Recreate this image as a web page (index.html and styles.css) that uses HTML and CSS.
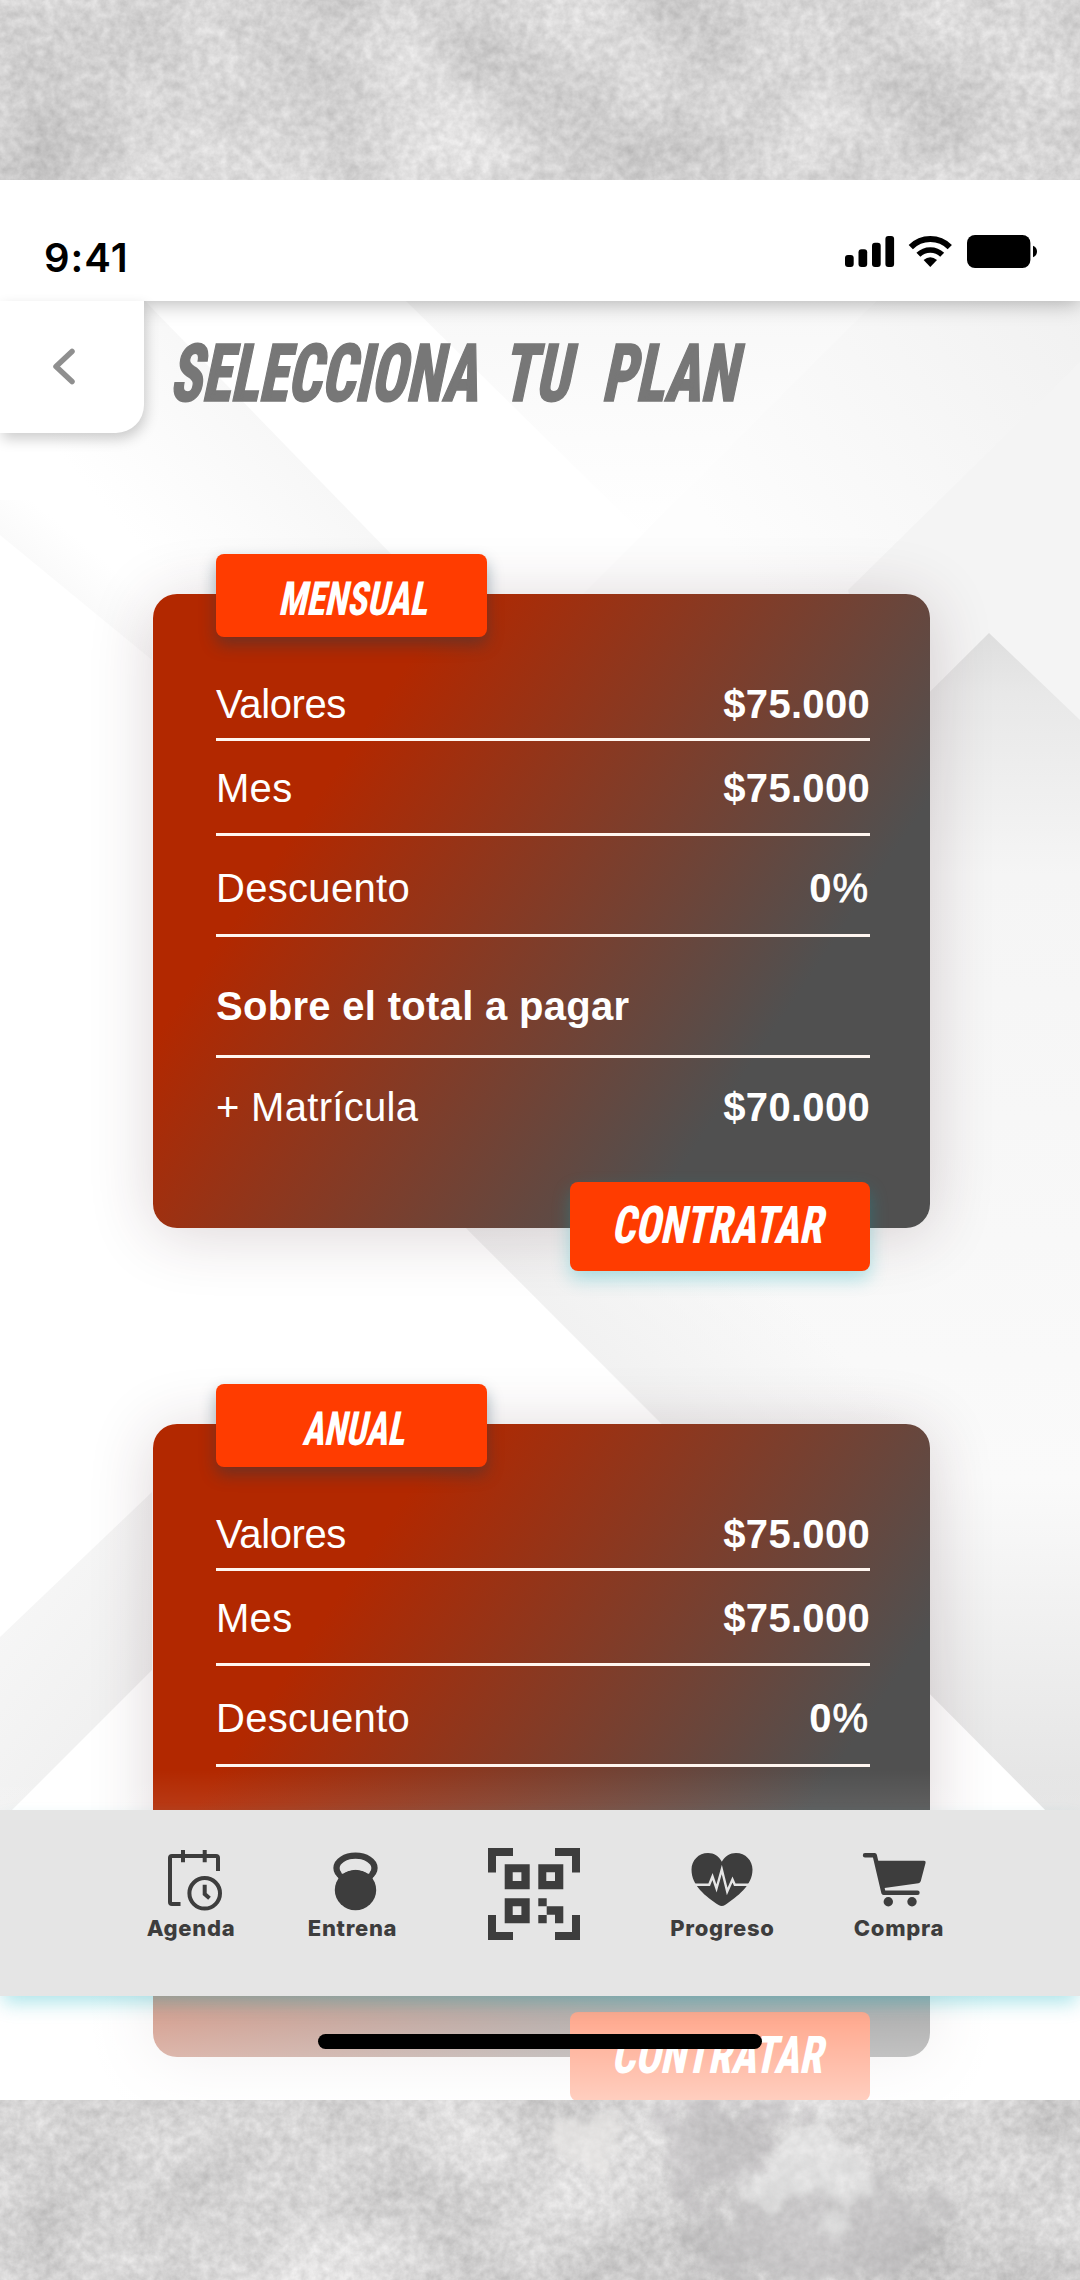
FILE: index.html
```html
<!doctype html>
<html lang="es">
<head>
    <meta charset="UTF-8">
    <meta name="viewport" content="width=device-width, initial-scale=1.0">
    <title>Selecciona tu plan</title>
    <link rel="stylesheet" href="styles.css">
</head>
<body>
    <svg class="wall" width="1080" height="2280" viewBox="0 0 1080 2280">
        <filter id="concrete" x="0" y="0" width="100%" height="100%" color-interpolation-filters="sRGB">
            <feTurbulence type="fractalNoise" baseFrequency="0.008 0.009" numOctaves="7" seed="31" result="big"/>
            <feColorMatrix in="big" type="matrix" values="0.2 0 0 0 0.737  0.2 0 0 0 0.733  0.2 0 0 0 0.733  0 0 0 0 1" result="stains"/>
            <feTurbulence type="fractalNoise" baseFrequency="0.11" numOctaves="4" seed="5" result="fine"/>
            <feColorMatrix in="fine" type="matrix" values="0.15 0 0 0 0.425  0.15 0 0 0 0.425  0.15 0 0 0 0.425  0 0 0 0 1" result="grain"/>
            <feComposite in="stains" in2="grain" operator="arithmetic" k1="0" k2="1" k3="1" k4="-0.5"/>
        </filter>
        <filter id="soft" x="-50%" y="-50%" width="200%" height="200%">
            <feTurbulence type="fractalNoise" baseFrequency="0.04" numOctaves="5" seed="3" result="edge"/>
            <feDisplacementMap in="SourceGraphic" in2="edge" scale="90" xChannelSelector="R" yChannelSelector="G"/>
            <feGaussianBlur stdDeviation="3"/>
        </filter>
        <rect width="1080" height="2280" filter="url(#concrete)"/>
        <g filter="url(#soft)">
            <path d="M670 2100H800L740 2190L690 2200L660 2150Z" fill="#b4b2b3" opacity=".4"/>
            <path d="M780 2180L860 2170L960 2200L900 2280H680L700 2230Z" fill="#b4b2b3" opacity=".45"/>
            <path d="M560 2100L620 2110L610 2180L570 2160Z" fill="#ecebea" opacity=".6"/>
            <path d="M730 2190L820 2120L880 2190L820 2240L830 2180L770 2210Z" fill="#eeeded" opacity=".5"/>
        </g>
    </svg>

    <div class="phone">
        <div class="status">
            <span class="time">9:41</span>
            <svg class="status-icons" width="200" height="42" viewBox="0 0 200 42">
                <rect x="5" y="25" width="8.7" height="12" rx="3"/>
                <rect x="18.5" y="19.3" width="8.7" height="17.7" rx="3"/>
                <rect x="32" y="12.7" width="8.7" height="24.3" rx="3"/>
                <rect x="45.4" y="6" width="8.7" height="31" rx="3"/>
                <g class="wifi">
                    <path d="M70.8 17.2A27.5 27.5 0 0 1 109.8 17.2" stroke-width="6"/>
                    <path d="M78.4 24.8A17 17 0 0 1 102.2 24.8" stroke-width="5.6"/>
                </g>
                <path d="M83.6 30Q90.3 24.4 97 30L90.3 37Z"/>
                <rect x="127" y="5" width="63.4" height="33" rx="8"/>
                <path d="M193 15.7Q197 17.5 197 21.5T193 27.3Z"/>
            </svg>
        </div>

        <div class="screen">
            <svg class="shapes" width="1080" height="1799" viewBox="0 301 1080 1799">
                <defs>
                    <linearGradient id="s1" x1="0" y1="0" x2="0" y2="1">
                        <stop offset="0" stop-color="#f3f3f3"/><stop offset="1" stop-color="#ffffff"/>
                    </linearGradient>
                    <linearGradient id="s2" gradientUnits="userSpaceOnUse" x1="1080" y1="301" x2="740" y2="560">
                        <stop offset="0" stop-color="#f1f1f1"/><stop offset="1" stop-color="#fdfdfd"/>
                    </linearGradient>
                    <linearGradient id="s3" x1="0" y1="0" x2="0" y2="1">
                        <stop offset="0" stop-color="#dedede"/><stop offset=".05" stop-color="#e8e8e8"/>
                        <stop offset=".2" stop-color="#f5f5f5"/><stop offset=".7" stop-color="#fafafa"/>
                        <stop offset="1" stop-color="#e1e1e1"/>
                    </linearGradient>
                    <linearGradient id="s4" gradientUnits="userSpaceOnUse" x1="560" y1="1330" x2="690" y2="1200">
                        <stop offset="0" stop-color="#f1f1f1"/><stop offset="1" stop-color="#f1f1f1" stop-opacity="0"/>
                    </linearGradient>
                    <linearGradient id="s5" x1="0" y1="0" x2=".6" y2="1">
                        <stop offset="0" stop-color="#f9f9f9"/><stop offset="1" stop-color="#efefef"/>
                    </linearGradient>
                    <linearGradient id="s6" gradientUnits="userSpaceOnUse" x1="290" y1="440" x2="150" y2="560">
                        <stop offset="0" stop-color="#f7f7f7"/><stop offset="1" stop-color="#ffffff"/>
                    </linearGradient>
                    <linearGradient id="s7" gradientUnits="userSpaceOnUse" x1="76" y1="598" x2="106" y2="562">
                        <stop offset="0" stop-color="#fafafa"/><stop offset="1" stop-color="#fafafa" stop-opacity="0"/>
                    </linearGradient>
                </defs>
                <path d="M145 301L430 594H0V301Z" fill="url(#s6)"/>
                <path d="M0 535L152 660V500H0Z" fill="url(#s7)"/>
                <path d="M406 301H876L647 538Z" fill="url(#s1)" opacity=".6"/>
                <path d="M876 301H1080V611H566Z" fill="url(#s2)"/>
                <path d="M1080 362V900H930L848 590Z" fill="#f4f4f4"/>
                <path d="M989 633L1080 720V1845L465 1227L640 980Z" fill="url(#s3)"/>
                <path d="M465 1227L662 1424H930V1200H465Z" fill="url(#s4)"/>
                <path d="M0 1637L152 1492V1670L12 1810H0Z" fill="url(#s5)"/>
            </svg>

            <div class="heading">
                <button class="back" aria-label="Volver">
                    <svg width="24" height="40" viewBox="0 0 24 40"><path d="M20 4.500L4 19.500L20 34.500"/></svg>
                </button>
                <h1 class="title">
                    <svg class="display" width="600" height="80" viewBox="0 0 600 80">
                        <g transform="translate(0 68) skewX(-12)" font-size="80">
                            <text x="-3" textLength="308" lengthAdjust="spacingAndGlyphs">SELECCIONA</text>
                            <text x="329" textLength="68" lengthAdjust="spacingAndGlyphs">TU</text>
                            <text x="429" textLength="135" lengthAdjust="spacingAndGlyphs">PLAN</text>
                        </g>
                    </svg>
                </h1>
            </div>

            <div class="plans">
                <section class="plan">
                    <h2 class="plan-name">
                        <svg class="display" width="271" height="83" viewBox="0 0 271 83">
                            <text transform="translate(62 61) skewX(-12)" font-size="47" textLength="149" lengthAdjust="spacingAndGlyphs">MENSUAL</text>
                        </svg>
                    </h2>
                    <div class="row row-values"><span>Valores</span><b>$75.000</b></div>
                    <div class="row row-month"><span>Mes</span><b>$75.000</b></div>
                    <div class="row row-discount"><span>Descuento</span><b class="percent">0<i>%</i></b></div>
                    <div class="row row-total"><b>Sobre el total a pagar</b></div>
                    <div class="row row-fee"><span>+ Matrícula</span><b>$70.000</b></div>
                    <button class="hire">
                        <svg class="display" width="300" height="89" viewBox="0 0 300 89">
                            <text transform="translate(41 60.500) skewX(-12)" font-size="52" textLength="211" lengthAdjust="spacingAndGlyphs">CONTRATAR</text>
                        </svg>
                    </button>
                </section>

                <section class="plan">
                    <h2 class="plan-name">
                        <svg class="display" width="271" height="83" viewBox="0 0 271 83">
                            <text transform="translate(86 61) skewX(-12)" font-size="47" textLength="102" lengthAdjust="spacingAndGlyphs">ANUAL</text>
                        </svg>
                    </h2>
                    <div class="row row-values"><span>Valores</span><b>$75.000</b></div>
                    <div class="row row-month"><span>Mes</span><b>$75.000</b></div>
                    <div class="row row-discount"><span>Descuento</span><b class="percent">0<i>%</i></b></div>
                    <div class="row row-total"></div>
                    <div class="row row-fee"></div>
                    <button class="hire hire-flat">
                        <svg class="display" width="300" height="89" viewBox="0 0 300 89">
                            <text transform="translate(41 60.500) skewX(-12)" font-size="52" textLength="211" lengthAdjust="spacingAndGlyphs">CONTRATAR</text>
                        </svg>
                    </button>
                </section>
            </div>
        </div>

        <div class="fade"></div>

        <nav class="tabs">
            <a class="tab">
                <svg width="80" height="64" viewBox="0 0 80 64">
                    <g class="line" stroke-width="4">
                        <path d="M67 23V10Q67 8 65 8H21Q19 8 19 10V54Q19 56 21 56H29.500"/>
                        <path d="M32 2V14.300M53.700 2V14.300"/>
                        <circle cx="53.700" cy="45.300" r="15.300"/>
                        <path d="M53.700 36.700V46L58.500 50.300"/>
                    </g>
                </svg>
                <span>Agenda</span>
            </a>
            <a class="tab">
                <svg width="80" height="64" viewBox="0 0 80 64">
                    <ellipse class="line" cx="42.500" cy="20" rx="19" ry="12.300" stroke-width="6.300"/>
                    <path d="M24 27L29 38L56 38L61 27Z"/>
                    <ellipse cx="42.500" cy="42" rx="20.700" ry="20.300"/>
                    <path class="hole" d="M27.500 22Q30 11 42.500 11T57.500 22L56 26Q42.500 17 29 26Z"/>
                </svg>
                <span>Entrena</span>
            </a>
            <a class="tab">
                <svg width="92" height="92" viewBox="0 0 92 92">
                    <path d="M0 0H25V8H8V24.500H0ZM67 0H92V24.500H84V8H67ZM0 67H8V84H25V92H0ZM84 67H92V92H67V84H84Z"/>
                    <path fill-rule="evenodd" d="M16.700 16.300h25v25h-25zM24.700 24.300v8.700h8.700v-8.700zM50.300 16.300h25v25h-25zM58.300 24.300v8.700h8.700v-8.700zM16.700 50.300h25v25h-25zM24.700 58.300v8.700h8.700v-8.700z"/>
                    <path d="M50.300 50.300h8.400v8h16.600v17h-8.300v-8.600h-8.300v-8.400h-8.400zM50.300 67h8.400v8.300h-8.400z"/>
                </svg>
            </a>
            <a class="tab">
                <svg width="80" height="64" viewBox="0 0 80 64">
                    <path d="M38.800 13.700C42 8 47 5 53 5C62.500 5 69.500 12.500 69.500 21.500C69.500 38 54 48.500 42 57Q38.800 59 35.600 57C23 48.500 8.500 38 8.500 21.500C8.500 12.500 15.500 5 25 5C31 5 36 8 38.800 13.700Z"/>
                    <path class="pulse" d="M10 36.700H26.200L29.500 28.500L33.500 40.500L38.800 21.500L44.200 43.500L49.500 31.500L51.800 36.700H68"/>
                </svg>
                <span>Progreso</span>
            </a>
            <a class="tab">
                <svg width="80" height="64" viewBox="0 0 80 64">
                    <path class="cart" d="M6 7.300H15.700L24.500 44.800H58.500"/>
                    <path d="M17 12.700H65Q67 12.700 66.600 14.800L61.800 33Q61.300 34.800 59.500 35.200L25.500 40L23 41Z"/>
                    <circle cx="29.300" cy="53.700" r="4.700"/>
                    <circle cx="53" cy="53.700" r="4.700"/>
                </svg>
                <span>Compra</span>
            </a>
        </nav>
        <div class="home-bar"></div>
    </div>
</body>
</html>
```
FILE: styles.css
```css
* {
    box-sizing: border-box;
}

body {
    margin: 0;
    height: 2280px;
    padding-top: 180px;
    background-color: #d2d1d1;
    font-family: "Liberation Sans", Arial, sans-serif;
    position: relative;
    overflow: hidden;
}

h1, h2 {
    margin: 0;
}

button {
    border: none;
    padding: 0;
}

svg {
    display: block;
}

.wall {
    position: absolute;
    top: 0;
    left: 0;
}

.phone {
    position: relative;
    display: flex;
    flex-direction: column;
    width: 1080px;
    height: 1920px;
    background-color: #ffffff;
    overflow: hidden;
}

.status {
    flex: none;
    display: flex;
    justify-content: space-between;
    height: 121px;
    padding: 50px 40px 0 44px;
    background-color: #ffffff;
    box-shadow: 0 2px 20px rgba(0, 0, 0, 0.3);
    position: relative;
    z-index: 1;
}

.time {
    padding-top: 4px;
    font-family: Inter, sans-serif;
    font-size: 40px;
    font-weight: 560;
    line-height: 48px;
    letter-spacing: 1px;
}

.wifi {
    fill: none;
    stroke: #000000;
}

.screen {
    flex: 1;
    position: relative;
}

.shapes {
    position: absolute;
    top: 0;
    left: 0;
}

/* condensed slanted lettering */
.display {
    font-family: Roboto, sans-serif;
    font-weight: 800;
    font-stretch: 75%;
    overflow: visible;
}

.heading {
    display: flex;
    height: 253px;
    position: relative;
    z-index: 2;
}

.back {
    display: flex;
    justify-content: center;
    align-items: center;
    width: 144px;
    height: 132px;
    padding: 0 16px 0 0;
    background-color: #ffffff;
    border-radius: 0 0 28px 0;
    box-shadow: 2px 6px 14px rgba(0, 0, 0, 0.2);
}

.back path {
    fill: none;
    stroke: #8f8f8f;
    stroke-width: 5.5;
    stroke-linecap: round;
    stroke-linejoin: round;
}

.title {
    padding: 32px 0 0 28px;
}

.title .display {
    fill: #777777;
    stroke: #777777;
    stroke-width: 1.6;
}

.plans {
    display: flex;
    flex-direction: column;
    gap: 196px;
    width: 777px;
    margin: 40px 0 0 153px;
    position: relative;
}

.plan {
    position: relative;
    height: 633.5px;
    padding: 90px 60px 0 63px;
    border-radius: 24px;
    background: linear-gradient(124deg, #b22800 25%, #505050 76%);
    box-shadow: 0 6px 64px rgba(70, 30, 40, 0.19);
    color: #ffffff;
    font-size: 40px;
    line-height: 40px;
}

.plan-name {
    position: absolute;
    top: -40px;
    left: 63px;
    border-radius: 8px;
    background-color: #ff3c00;
    box-shadow: 0 8px 16px rgba(20, 60, 80, 0.4);
}

.plan-name .display,
.hire .display {
    fill: #ffffff;
}

.row {
    display: flex;
    justify-content: space-between;
    box-sizing: content-box;
    height: 40px;
    border-bottom: 3px solid #fff6f0;
}

.row span {
    letter-spacing: 0.3px;
}

.row b {
    letter-spacing: 0.3px;
}

.row-values {
    padding-bottom: 14px;
}

.row-values span {
    letter-spacing: -0.4px;
}

.row-month {
    padding: 27px 0 25px;
}

.row-discount {
    padding: 32px 0 26px;
}

.row-total {
    padding: 49px 0 29px;
}

.row-fee {
    padding-top: 29px;
    border: none;
}

.row .percent {
    padding-right: 1px;
    letter-spacing: 1px;
}

.percent i {
    font-style: normal;
    font-weight: normal;
    -webkit-text-stroke: 0.8px #ffffff;
}

.hire {
    position: absolute;
    right: 60px;
    bottom: -43.5px;
    border-radius: 8px;
    background-color: #ff3c00;
    box-shadow: 0 8px 18px rgba(0, 175, 190, 0.3);
}

.hire-flat {
    box-shadow: none;
}

.fade {
    position: absolute;
    left: 0;
    right: 0;
    bottom: 0;
    height: 330px;
    background: linear-gradient(rgba(255, 255, 255, 0), rgba(255, 255, 255, 0.75));
}

.tabs {
    position: absolute;
    left: 0;
    right: 0;
    bottom: 104px;
    display: grid;
    grid-template-columns: 160px 163px 200px 177px 176px;
    height: 186px;
    padding: 38px 0 0 111px;
    background-color: #e5e5e5;
    box-shadow: 0 10px 18px -3px rgba(0, 175, 190, 0.32);
}

.tab {
    display: flex;
    flex-direction: column;
    align-items: center;
    gap: 4px;
    color: #3d3d3d;
    font-family: Inter, sans-serif;
    font-size: 22px;
    font-weight: 850;
    line-height: 24px;
    letter-spacing: 0.7px;
}

.tab svg {
    fill: #3d3d3d;
}

.tab .line {
    fill: none;
    stroke: #3d3d3d;
}

.tab .hole {
    fill: #e5e5e5;
}

.tab .pulse {
    fill: none;
    stroke: #e5e5e5;
    stroke-width: 2.4;
}

.tab .cart {
    fill: none;
    stroke: #3d3d3d;
    stroke-width: 4.4;
    stroke-linecap: round;
    stroke-linejoin: round;
}

.home-bar {
    position: absolute;
    left: 318px;
    bottom: 51px;
    width: 444px;
    height: 15px;
    border-radius: 8px;
    background-color: #000000;
}
```
